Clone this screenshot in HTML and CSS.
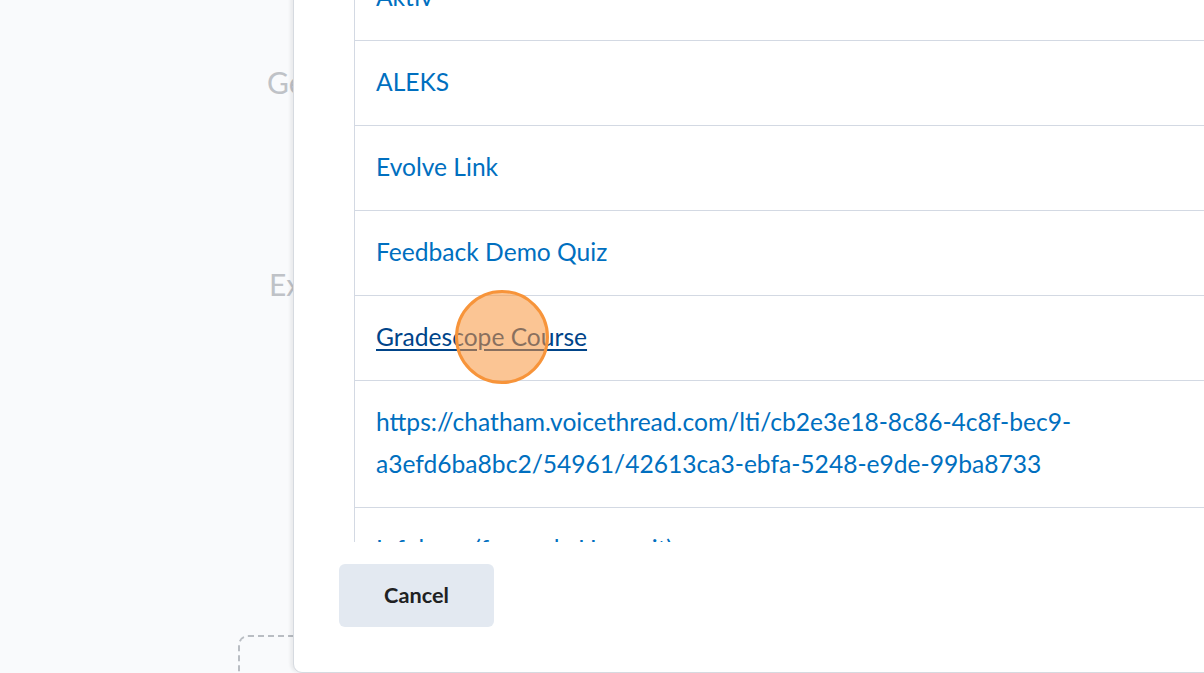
FILE: index.html
```html
<!DOCTYPE html>
<html lang="en">
<head>
<meta charset="utf-8">
<title>Select link</title>
<link rel="stylesheet" href="styles.css">
</head>
<body>
<div class="page">
  <div class="bg-labels">
    <div class="bg-label first">General</div>
    <div class="bg-label second">External</div>
  </div>
  <div class="dropzone"></div>
</div>

<div class="dialog" role="dialog">
  <div class="dialog-body">
    <ul class="link-list">
      <li class="row"><a href="#">Aktiv</a></li>
      <li class="row"><a href="#">ALEKS</a></li>
      <li class="row"><a href="#">Evolve Link</a></li>
      <li class="row"><a href="#">Feedback Demo Quiz</a></li>
      <li class="row"><a href="#" class="hover">Gradescope Course</a></li>
      <li class="row"><a href="#">https://chatham.voicethread.com/lti/cb2e3e18-8c86-4c8f-bec9-<br>a3efd6ba8bc2/54961/42613ca3-ebfa-5248-e9de-99ba8733</a></li>
      <li class="row"><a href="#">Infobase (formerly Hoonuit)</a></li>
      <li class="row"><a href="#">Kaltura</a></li>
    </ul>
  </div>
  <div class="dialog-footer">
    <button class="btn">Cancel</button>
  </div>
</div>

<div class="cursor"></div>
</body>
</html>
```

FILE: styles.css
```css
html, body {
  margin: 0;
  padding: 0;
}
body {
  width: 1204px;
  height: 673px;
  overflow: hidden;
  background: #f9fafc;
  font-family: Lato, "Noto Sans", sans-serif;
  position: relative;
}
.page {
  padding-left: 267px;
  padding-top: 62px;
}
.bg-labels {
  display: flex;
  flex-direction: column;
}
.bg-label {
  font-size: 30px;
  color: #bfc2c7;
  line-height: 40px;
}
.bg-label.second {
  margin-top: 162px;
  margin-left: 2px;
}
.dropzone {
  margin-top: 331px;
  margin-left: -29px;
  width: 1000px;
  height: 120px;
  border: 2px dashed #b9bdc3;
  border-radius: 10px;
}
.dialog {
  position: absolute;
  left: 293px;
  top: -20px;
  width: 1000px;
  height: 693px;
  background: #fff;
  border: 1px solid #d6dae0;
  border-radius: 9px;
  box-shadow: -3px 0 3px rgba(0,0,0,0.06);
  display: flex;
  flex-direction: column;
  box-sizing: border-box;
}
.dialog-body {
  height: 561px;
  overflow: hidden;
  padding-left: 60px;
  flex: none;
}
.link-list {
  list-style: none;
  margin: -25px 0 0 0;
  padding: 0;
  border-left: 1px solid #d3d9e3;
}
.row {
  padding: 20px 0 22px 21px;
  border-bottom: 1px solid #d3d9e3;
  font-size: 24.6px;
  line-height: 42px;
}
.row a {
  color: #006fbf;
  text-decoration: none;
}
.row a.hover {
  color: #004489;
  text-decoration: underline;
  text-underline-offset: 3px;
}
.dialog-footer {
  padding: 22px 0 0 45px;
}
.btn {
  width: 155px;
  height: 63px;
  border: none;
  border-radius: 6px;
  background: #e3e9f1;
  color: #202122;
  font-family: Lato, "Noto Sans", sans-serif;
  font-weight: 700;
  font-size: 21.7px;
  padding: 0 0 2px 0;
}
.cursor {
  position: absolute;
  left: 455px;
  top: 290px;
  width: 88px;
  height: 88px;
  border-radius: 50%;
  border: 3px solid #f7943a;
  background: rgba(248, 150, 60, 0.55);
}
```
